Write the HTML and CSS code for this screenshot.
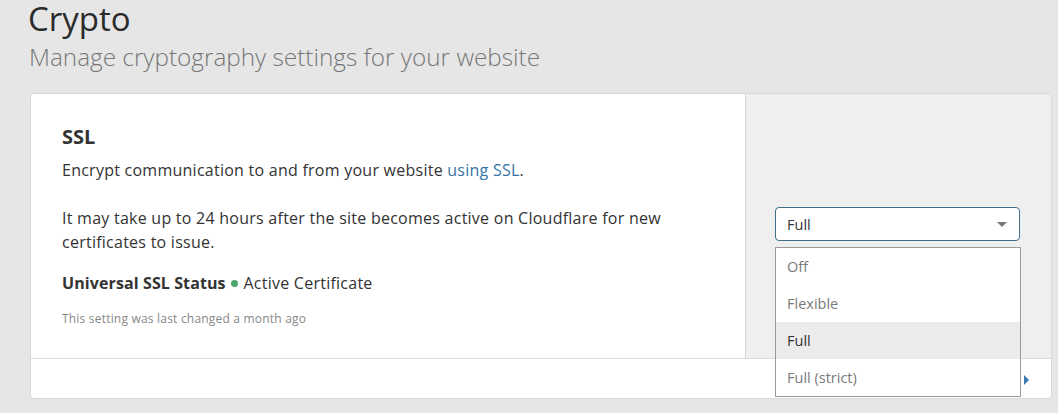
FILE: index.html
```html
<!DOCTYPE html>
<html lang="en">
<head>
<meta charset="utf-8">
<title>Crypto</title>
<link rel="stylesheet" href="styles.css">
</head>
<body>
<header class="page-header">
  <h1 class="page-title">Crypto</h1>
  <p class="page-subtitle">Manage cryptography settings for your website</p>
</header>
<section class="card">
  <div class="card-row">
    <div class="card-main">
      <h2 class="card-title">SSL</h2>
      <p class="card-text">Encrypt communication to and from your website <a class="link" href="#">using SSL</a>.</p>
      <p class="card-text">It may take up to 24 hours after the site becomes active on Cloudflare for new certificates to issue.</p>
      <p class="status"><strong class="status-label">Universal SSL Status</strong> <span class="dot"></span> Active Certificate</p>
      <p class="changed">This setting was last changed a month ago</p>
    </div>
    <div class="card-side">
      <div class="select-wrap">
        <div class="select">
          <span class="select-value">Full</span>
          <span class="caret"></span>
        </div>
        <ul class="menu">
          <li class="menu-item">Off</li>
          <li class="menu-item">Flexible</li>
          <li class="menu-item is-selected">Full</li>
          <li class="menu-item">Full (strict)</li>
        </ul>
      </div>
    </div>
  </div>
  <div class="card-footer">
    <span class="help-arrow"></span>
  </div>
</section>
</body>
</html>
```

FILE: styles.css
```css
* { box-sizing: border-box; }
html, body { margin: 0; padding: 0; }
body {
  background: #e6e6e6;
  font-family: "Open Sans", "Noto Sans", "Liberation Sans", sans-serif;
  color: #333;
  height: 413px;
  overflow: hidden;
}
.page-header {
  padding: 0 0 0 28px;
}
.page-title {
  margin: 0;
  font-size: 33px;
  font-weight: 400;
  line-height: 38px;
  color: #2b2b2b;
}
.page-subtitle {
  margin: 4px 0 0 1px;
  font-size: 24.3px;
  font-weight: 300;
  line-height: 30px;
  color: #777;
}
.card {
  margin: 21px 6px 0 30px;
  background: #fff;
  border: 1px solid #d9d9d9;
  border-radius: 4px;
}
.card-row {
  display: flex;
  height: 264px;
}
.card-main {
  flex: 1;
  padding: 31px 32px 0 31px;
}
.card-title {
  margin: 0;
  font-size: 20px;
  font-weight: 700;
  line-height: 24px;
}
.card-text {
  margin: 9px 0 24px;
  font-size: 16px;
  letter-spacing: 0.25px;
  line-height: 24px;
  max-width: 640px;
}
.card-text + .card-text { margin-top: 0; margin-bottom: 17px; }
.link { color: #3674a6; text-decoration: none; }
.status {
  margin: 0;
  font-size: 16px;
  letter-spacing: 0.25px;
  line-height: 24px;
}
.status-label { font-weight: 700; letter-spacing: 0.1px; }
.dot {
  display: inline-block;
  width: 7px;
  height: 7px;
  border-radius: 50%;
  background: #4aa56e;
  vertical-align: 2px;
  margin: 0 1px;
}
.changed {
  margin: 16px 0 0;
  font-size: 12px;
  letter-spacing: 0.2px;
  line-height: 16px;
  color: #888;
}
.card-side {
  width: 306px;
  background: #efefef;
  border-left: 1px solid #d4d4d4;
  border-top-right-radius: 4px;
  display: flex;
  align-items: flex-start;
  padding: 113px 0 0 29px;
}
.select-wrap {
  position: relative;
  width: 245px;
}
.select {
  height: 34px;
  border: 1px solid #3f6d8e;
  border-radius: 4px;
  background: #fff;
  display: flex;
  align-items: center;
  justify-content: space-between;
  padding: 0 12px 0 11px;
  font-size: 14.5px;
  color: #333;
}
.caret {
  width: 0;
  height: 0;
  border-left: 5px solid transparent;
  border-right: 5px solid transparent;
  border-top: 5px solid #777;
}
.menu {
  position: absolute;
  left: 0;
  top: 40px;
  width: 246px;
  margin: 0;
  padding: 0;
  list-style: none;
  background: #fff;
  border: 1px solid #9a9a9a;
  z-index: 2;
}
.menu-item {
  height: 37px;
  line-height: 37px;
  padding-left: 11px;
  font-size: 14.5px;
  color: #7a7a7a;
}
.menu-item.is-selected {
  background: #ebebeb;
  color: #333;
}
.card-footer {
  height: 40px;
  border-top: 1px solid #dcdcdc;
  display: flex;
  align-items: center;
  justify-content: flex-end;
  padding-right: 22px;
}
.help-arrow {
  width: 0;
  height: 0;
  border-top: 5px solid transparent;
  border-bottom: 5px solid transparent;
  border-left: 5px solid #3a7ab0;
  margin-top: 2px;
}
```
